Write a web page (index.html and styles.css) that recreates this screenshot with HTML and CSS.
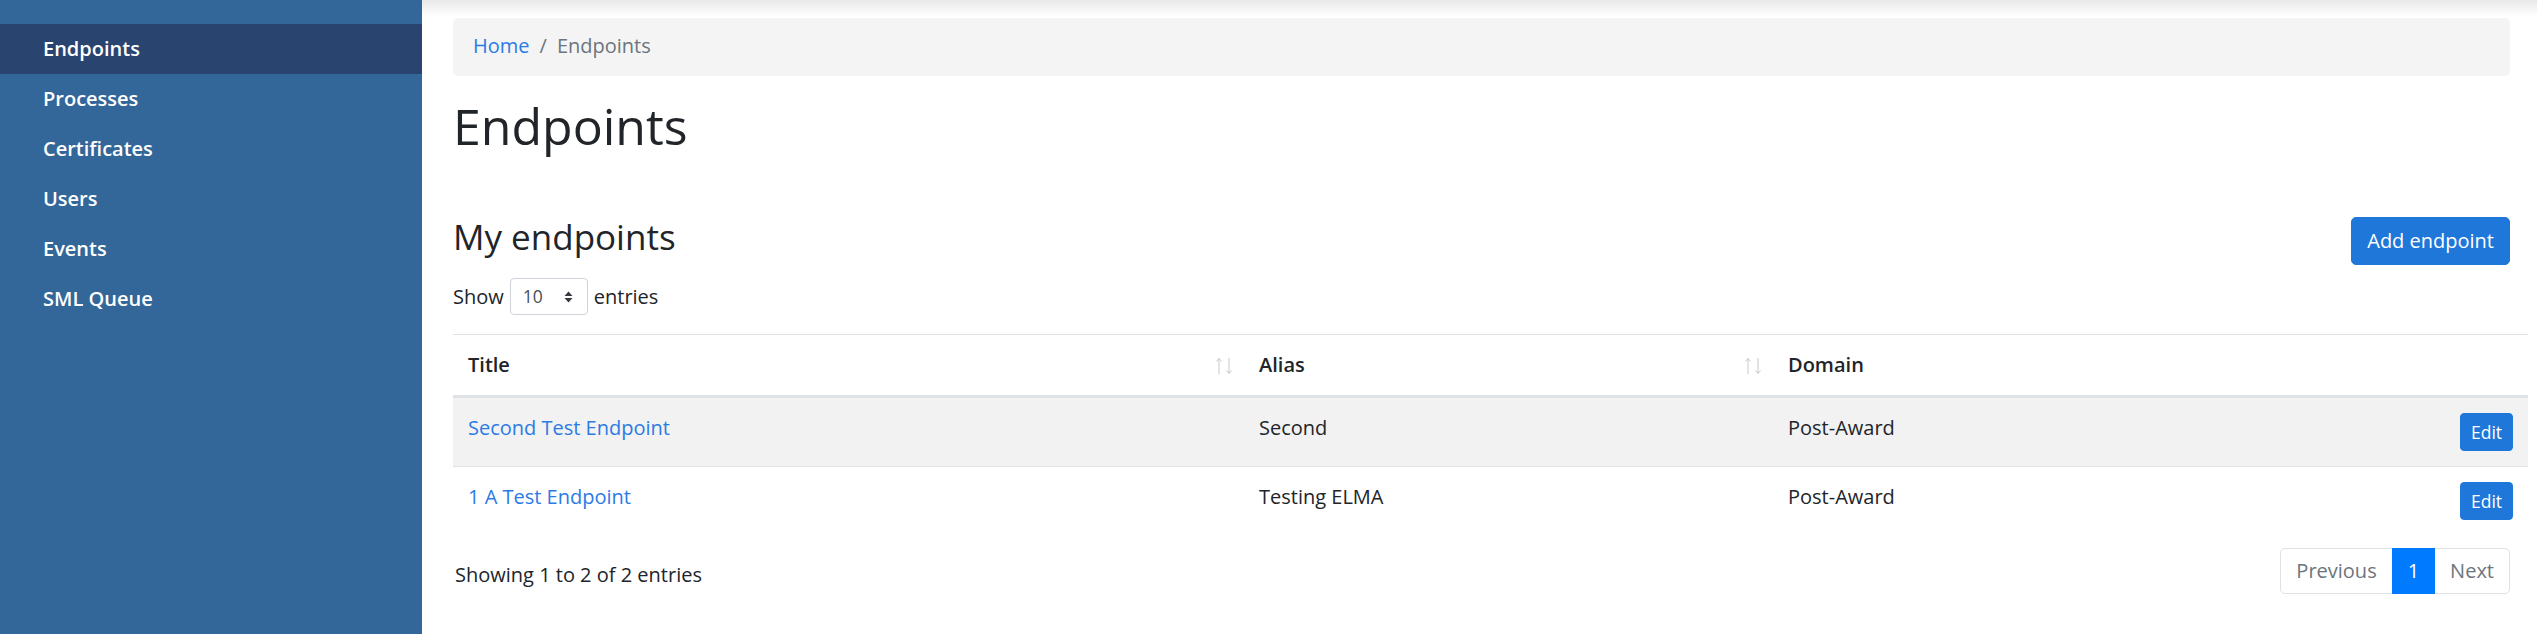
FILE: index.html
```html
<!DOCTYPE html>
<html lang="en">
<head>
<meta charset="utf-8">
<title>Endpoints</title>
<link rel="stylesheet" href="styles.css">
</head>
<body>
<div class="app">
  <aside class="sidebar">
    <nav class="nav">
      <a class="nav-item active" href="#">Endpoints</a>
      <a class="nav-item" href="#">Processes</a>
      <a class="nav-item" href="#">Certificates</a>
      <a class="nav-item" href="#">Users</a>
      <a class="nav-item" href="#">Events</a>
      <a class="nav-item" href="#">SML Queue</a>
    </nav>
  </aside>
  <main class="main">
    <ol class="breadcrumb">
      <li><a href="#">Home</a></li>
      <li class="sep">/</li>
      <li class="current">Endpoints</li>
    </ol>
    <h1 class="page-title">Endpoints</h1>
    <div class="section-head">
      <h3 class="section-title">My endpoints</h3>
      <button class="btn btn-primary">Add endpoint</button>
    </div>
    <div class="length">
      <span>Show</span>
      <span class="select"><span>10</span>
        <svg class="select-arrow" width="9" height="14" viewBox="0 0 9 14"><path d="M0.5 6 L4.5 1.5 L8.5 6 Z M0.5 8 L4.5 12.5 L8.5 8 Z" fill="#343a40"/></svg>
      </span>
      <span>entries</span>
    </div>
    <table class="table">
      <colgroup>
        <col class="c-title">
        <col class="c-alias">
        <col class="c-domain">
        <col class="c-actions">
      </colgroup>
      <thead>
        <tr>
          <th class="sortable"><div class="th-inner"><span>Title</span>
            <svg class="sort" width="19" height="18" viewBox="0 0 19 18"><path d="M4 17 V1.5 M1.5 4.5 L4 1.5 L6.5 4.5 M14 1 V16.5 M11.5 13.5 L14 16.5 L16.5 13.5" fill="none" stroke="#c9c9c9" stroke-width="1"/></svg>
          </div></th>
          <th class="sortable"><div class="th-inner"><span>Alias</span>
            <svg class="sort" width="19" height="18" viewBox="0 0 19 18"><path d="M4 17 V1.5 M1.5 4.5 L4 1.5 L6.5 4.5 M14 1 V16.5 M11.5 13.5 L14 16.5 L16.5 13.5" fill="none" stroke="#c9c9c9" stroke-width="1"/></svg>
          </div></th>
          <th>Domain</th>
          <th></th>
        </tr>
      </thead>
      <tbody>
        <tr class="odd">
          <td><a href="#">Second Test Endpoint</a></td>
          <td>Second</td>
          <td>Post-Award</td>
          <td class="actions"><button class="btn btn-primary btn-sm">Edit</button></td>
        </tr>
        <tr>
          <td><a href="#">1 A Test Endpoint</a></td>
          <td>Testing ELMA</td>
          <td>Post-Award</td>
          <td class="actions"><button class="btn btn-primary btn-sm">Edit</button></td>
        </tr>
      </tbody>
    </table>
    <div class="table-foot">
      <div class="info">Showing 1 to 2 of 2 entries</div>
      <ul class="pagination">
        <li class="page disabled"><a href="#">Previous</a></li>
        <li class="page active"><a href="#">1</a></li>
        <li class="page disabled"><a href="#">Next</a></li>
      </ul>
    </div>
  </main>
</div>
</body>
</html>
```

FILE: styles.css
```css
* { box-sizing: border-box; }
html, body { margin: 0; padding: 0; }
body {
  font-family: "Open Sans", "Noto Sans", sans-serif;
  font-size: 20px;
  line-height: 1.5;
  color: #212529;
  background: #fff;
}
a { color: #2c7be5; text-decoration: none; }

.app {
  display: flex;
  min-height: 634px;
}

.sidebar {
  width: 422px;
  flex: 0 0 422px;
  background: #336699;
  padding-top: 24px;
}
.nav { display: flex; flex-direction: column; }
.nav-item {
  display: block;
  padding: 10px 43px;
  line-height: 30px;
  font-size: 20px;
  font-weight: 600;
  color: #fff;
}
.nav-item.active { background: #2a4470; }

.main {
  flex: 1;
  min-width: 0;
  padding: 18px 27px 0 31px;
  background: linear-gradient(to bottom, rgba(0,0,0,0.09), rgba(0,0,0,0) 16px) no-repeat;
}

.breadcrumb {
  display: flex;
  list-style: none;
  margin: 0 0 20px;
  padding: 13px 20px 15px;
  line-height: 30px;
  background: #f4f4f4;
  border-radius: 5px;
}
.breadcrumb .sep { padding: 0 10px; color: #6c757d; }
.breadcrumb .current { color: #6c757d; }

.page-title {
  margin: 0 0 10px;
  font-size: 50px;
  font-weight: 400;
  line-height: 60px;
}

.section-head {
  display: flex;
  align-items: center;
  justify-content: space-between;
  margin-top: 61px;
}
.section-title {
  margin: -4px 0 4px;
  font-size: 35px;
  font-weight: 400;
  line-height: 42px;
}

.btn {
  font-family: inherit;
  font-size: 20px;
  line-height: 30px;
  padding: 8px 15px;
  border: 1px solid transparent;
  border-radius: 5px;
  cursor: pointer;
}
.btn-primary {
  background: #1e77d9;
  border-color: #1e77d9;
  color: #fff;
}
.btn-sm {
  font-size: 17.5px;
  line-height: 26px;
  padding: 5px 10px;
  border-radius: 4px;
}

.length {
  display: flex;
  align-items: center;
  gap: 6px;
  margin-top: 13px;
}
.select {
  display: inline-flex;
  align-items: center;
  justify-content: space-between;
  width: 78px;
  height: 37px;
  padding: 0 14px 0 12px;
  border: 1px solid #ced4da;
  border-radius: 4px;
  font-size: 17.5px;
  color: #495057;
}

.table {
  width: calc(100% + 18px);
  border-collapse: collapse;
  table-layout: fixed;
  margin-top: 19px;
}
.c-title { width: 791px; }
.c-alias { width: 529px; }
.c-actions { width: 83px; }
.table th {
  text-align: left;
  font-weight: 600;
  padding: 15px;
  line-height: 30px;
  border-top: 1px solid #dee2e6;
  border-bottom: 3px solid #dee2e6;
}
.table th.sortable { padding-right: 10px; }
.th-inner {
  display: flex;
  justify-content: space-between;
  align-items: center;
}
.sort { display: block; margin-top: 2px; }
.table td {
  padding: 15px;
  line-height: 30px;
  vertical-align: top;
  border-top: 1px solid #dee2e6;
}
.table tbody tr:first-child td { border-top: 0; }
.table tr.odd td { background: #f2f2f2; }
.table td.actions { text-align: right; }
.table td.actions .btn { vertical-align: top; }

.table-foot {
  display: flex;
  justify-content: space-between;
  align-items: center;
  margin-top: 13px;
}
.info { padding-top: 8px; padding-left: 2px; line-height: 30px; }
.pagination {
  display: flex;
  list-style: none;
  margin: 0;
  padding: 0;
}
.page a {
  display: block;
  padding: 10px 15px;
  line-height: 24px;
  border: 1px solid #dee2e6;
  margin-left: -1px;
  color: #6c757d;
  background: #fff;
}
.page:first-child a { border-radius: 5px 0 0 5px; margin-left: 0; }
.page:last-child a { border-radius: 0 5px 5px 0; }
.page.active a {
  background: #007bff;
  border-color: #007bff;
  color: #fff;
  position: relative;
}
```
